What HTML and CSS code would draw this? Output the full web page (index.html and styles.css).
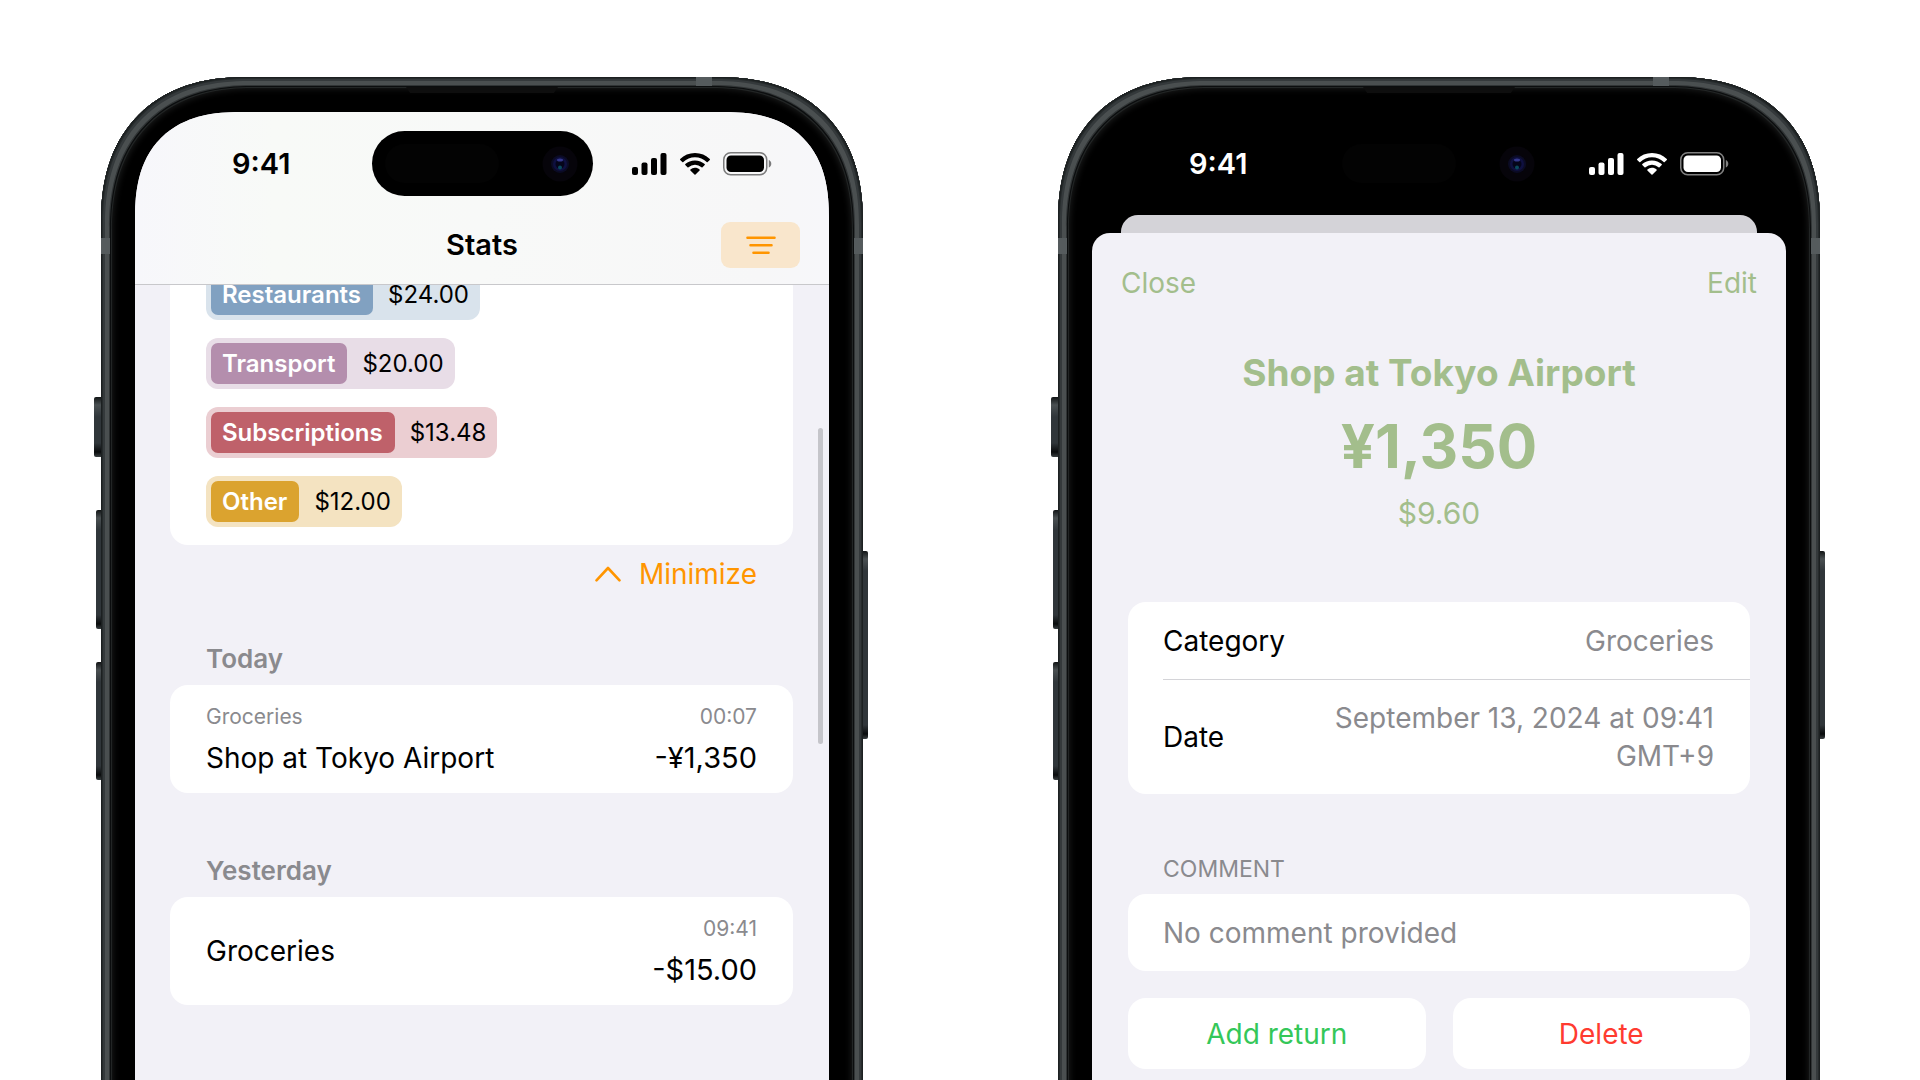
FILE: index.html
```html
<!DOCTYPE html>
<html lang="en">
<head>
<meta charset="utf-8">
<meta name="viewport" content="width=device-width, initial-scale=1">
<title>Stats</title>
<link rel="stylesheet" href="styles.css">
</head>
<body>
<svg class="sprite" aria-hidden="true">
  <symbol id="signal" viewBox="0 0 35 22">
    <rect x="0" y="14" width="6" height="8" rx="2"/>
    <rect x="9.5" y="9.500" width="6" height="12.500" rx="2"/>
    <rect x="19" y="5" width="6" height="17" rx="2"/>
    <rect x="28.500" y="0" width="6" height="22" rx="2"/>
  </symbol>
  <symbol id="wifi" viewBox="0 0 30 22">
    <path d="M15 0C20.800 0 26 2.200 29.800 5.900c.3.3.3.7 0 1L27.700 9c-.3.3-.7.3-1 0A16.800 16.800 0 0 0 3.300 9c-.3.300-.7.300-1 0L.2 6.900c-.3-.3-.3-.7 0-1C4 2.200 9.200 0 15 0z"/>
    <path d="M15 7.400c3.800 0 7.200 1.400 9.700 3.700.3.300.3.700 0 1l-2.200 2.200c-.3.300-.7.300-1 0a9.600 9.600 0 0 0-13 0c-.3.300-.7.300-1 0l-2.200-2.200c-.3-.3-.3-.7 0-1A14.200 14.200 0 0 1 15 7.400z"/>
    <path d="M15 14.700c1.800 0 3.400.6 4.600 1.700.3.300.3.700 0 1l-4.100 4.200c-.3.300-.7.300-1 0l-4.100-4.200c-.3-.3-.3-.7 0-1a6.700 6.700 0 0 1 4.600-1.700z"/>
  </symbol>
  <symbol id="battery" viewBox="0 0 49 24">
    <rect x=".75" y=".75" width="43" height="22" rx="7" fill="none" stroke="currentColor" stroke-width="1.500" opacity=".5"/>
    <rect x="3.500" y="3.500" width="37.500" height="16.500" rx="4.500"/>
    <path d="M45.800 8v7.500c1.500-.6 2.500-2 2.500-3.750S47.300 8.600 45.800 8z" opacity=".5"/>
  </symbol>
  <symbol id="camera" viewBox="0 0 36 36">
    <circle cx="18" cy="18" r="17.500" fill="#06040a"/>
    <circle cx="18" cy="18" r="9" fill="#0b0b24"/>
    <circle cx="18" cy="18" r="7" fill="#0f1040"/>
    <circle cx="18" cy="18" r="4.500" fill="#05051a"/>
    <ellipse cx="18" cy="14" rx="3" ry="1.500" fill="#34388c"/>
    <circle cx="18" cy="21.500" r="2" fill="#0a4a5c"/>
  </symbol>
</svg>

<main class="stage">
  <article class="phone">
    <span class="key key-action"></span><span class="key key-up"></span><span class="key key-down"></span><span class="key key-power"></span>
    <span class="band band-left"></span><span class="band band-right"></span><span class="band band-top"></span>
    <span class="speaker"></span>
    <div class="island"><span class="sensor"></span><svg class="lens"><use href="#camera"/></svg></div>

    <div class="screen stats">
      <header class="top">
        <div class="status">
          <time>9:41</time>
          <div class="indicators">
            <svg width="35" height="22"><use href="#signal"/></svg>
            <svg width="30" height="22"><use href="#wifi"/></svg>
            <svg width="49" height="24"><use href="#battery"/></svg>
          </div>
        </div>
        <div class="navbar">
          <h1>Stats</h1>
          <button class="filter" type="button" aria-label="Filter">
            <svg width="30" height="18" viewBox="0 0 30 18" fill="none" stroke="currentColor" stroke-width="2.600" stroke-linecap="round"><path d="M1.500 1.800h27M4.500 9.300h21M7.500 16.700h15"/></svg>
          </button>
        </div>
      </header>

      <div class="list">
        <ul class="card chips">
          <li class="chip blue"><span class="tag">Restaurants</span><span>$24.00</span></li>
          <li class="chip purple"><span class="tag">Transport</span><span>$20.00</span></li>
          <li class="chip red"><span class="tag">Subscriptions</span><span>$13.48</span></li>
          <li class="chip amber"><span class="tag">Other</span><span>$12.00</span></li>
        </ul>
        <button class="minimize" type="button">
          <svg width="26" height="16" viewBox="0 0 26 16" fill="none" stroke="currentColor" stroke-width="2.600" stroke-linecap="round" stroke-linejoin="round"><path d="M1.500 14.300L13 2l11.500 12.300"/></svg>
          Minimize
        </button>

        <section class="day">
          <h2>Today</h2>
          <div class="card entry">
            <div><p class="small">Groceries</p><p>Shop at Tokyo Airport</p></div>
            <div class="end"><p class="small">00:07</p><p class="sum">-¥1,350</p></div>
          </div>
        </section>
        <section class="day">
          <h2>Yesterday</h2>
          <div class="card entry">
            <div><p>Groceries</p></div>
            <div class="end"><p class="small">09:41</p><p class="sum">-$15.00</p></div>
          </div>
        </section>
      </div>
      <span class="scrollbar"></span>
    </div>
  </article>

  <article class="phone">
    <span class="key key-action"></span><span class="key key-up"></span><span class="key key-down"></span><span class="key key-power"></span>
    <span class="band band-left"></span><span class="band band-right"></span><span class="band band-top"></span>
    <span class="speaker"></span>
    <div class="island"><span class="sensor"></span><svg class="lens"><use href="#camera"/></svg></div>

    <div class="screen detail">
      <div class="status">
        <time>9:41</time>
        <div class="indicators">
          <svg width="35" height="22"><use href="#signal"/></svg>
          <svg width="30" height="22"><use href="#wifi"/></svg>
          <svg width="49" height="24"><use href="#battery"/></svg>
        </div>
      </div>
      <div class="behind"></div>
      <div class="sheet">
        <div class="actions">
          <button type="button">Close</button>
          <button type="button">Edit</button>
        </div>
        <header class="hero">
          <h2>Shop at Tokyo Airport</h2>
          <p class="amount">¥1,350</p>
          <p class="converted">$9.60</p>
        </header>
        <dl class="card facts">
          <div class="fact"><dt>Category</dt><dd>Groceries</dd></div>
          <div class="fact"><dt>Date</dt><dd>September 13, 2024 at 09:41 GMT+9</dd></div>
        </dl>
        <h3>COMMENT</h3>
        <p class="card comment">No comment provided</p>
        <div class="buttons">
          <button class="card add" type="button">Add return</button>
          <button class="card delete" type="button">Delete</button>
        </div>
      </div>
    </div>
  </article>
</main>
</body>
</html>
```

FILE: styles.css
```css
* { box-sizing: border-box; }

body, h1, h2, h3, p, ul, dl, dd { margin: 0; padding: 0; }

body {
  background: #fff;
  color: #000;
  font: 400 28px/36px Inter, "Liberation Sans", sans-serif;
}

button {
  border: 0;
  padding: 0;
  background: none;
  color: inherit;
  font: inherit;
  cursor: pointer;
}

.sprite { position: absolute; width: 0; height: 0; }

.stage {
  display: flex;
  gap: 195px;
  height: 100vh;
  padding: 77px 100px 0 101px;
  overflow: hidden;
}

/* Device body */
.phone {
  position: relative;
  display: flex;
  flex: 1;
  min-width: 0;
  min-height: 1200px;
  padding: 35px 34px 0;
  border-radius: 130px 130px 0 0;
  background: #000;
  box-shadow:
    inset 0 0 0 1px #1c2021,
    inset 0 0 0 2px #262b2c,
    inset 0 0 0 4px #34393b,
    inset 0 0 0 8px #4a4f50,
    inset 0 0 0 9px #303435,
    inset 0 0 0 10px #0b0d0e,
    inset 0 0 0 11px #222525,
    inset 0 0 6px 12px #1a1b1b;
}

.key {
  position: absolute;
  left: -5px;
  width: 5px;
  border-radius: 2px 0 0 2px;
  background: linear-gradient(#111415, #4a5052 8px, #30363a 20px, #30363a calc(100% - 14px), #090b0c calc(100% - 5px), #3a4042);
}
.key-action { top: 320px; left: -7px; width: 7px; height: 60px; }
.key-up { top: 433px; height: 119px; }
.key-down { top: 585px; height: 118px; }
.key-power { top: 474px; left: auto; right: -5px; height: 188px; border-radius: 0 2px 2px 0; }

.band { position: absolute; background: #555b5d; }
.band-left, .band-right { top: 161px; width: 9px; height: 16px; }
.band-left { left: 0; }
.band-right { right: 0; }
.band-top { top: 0; right: 151px; width: 16px; height: 9px; }

.speaker {
  position: absolute;
  top: 10px;
  left: 50%;
  width: 152px;
  height: 6px;
  margin-left: -76px;
  background: #0e0e0e;
  clip-path: polygon(0 0, 100% 0, calc(100% - 4px) 100%, 4px 100%);
}

.island {
  position: absolute;
  z-index: 3;
  top: 54px;
  left: 50%;
  display: flex;
  justify-content: space-between;
  align-items: center;
  width: 221px;
  height: 65px;
  margin-left: -110px;
  padding: 0 15px 0 13px;
  border-radius: 33px;
  background: #000;
}
.sensor { width: 114px; height: 39px; border-radius: 20px; background: #030303; }
.lens { width: 36px; height: 36px; }

/* Screen and status bar */
.screen {
  position: relative;
  flex: 1;
  min-width: 0;
  overflow: hidden;
}

.status {
  display: flex;
  justify-content: space-between;
  align-items: center;
  height: 103px;
  padding: 0 57px 0 97px;
  font-size: 29px;
  font-weight: 600;
}
.indicators { display: flex; align-items: center; gap: 13px; fill: currentColor; }

/* Stats */
.stats { border-radius: 90px 90px 0 0; background: #f2f1f7; }

/* Continuous corners where the browser can draw them */
@supports (corner-shape: superellipse(1.2)) {
  .phone { border-radius: 145px 145px 0 0; corner-shape: superellipse(1.2); }
  .stats { border-radius: 106px 106px 0 0; corner-shape: superellipse(1.3); }
}

.top {
  position: relative;
  z-index: 1;
  border-bottom: 1px solid #c8c8cb;
  background: linear-gradient(90deg, #f7f7fb, #f8faf7 20%, #f8f9f8 50%, #f7f7f8 90%, #f7f7fa);
}

.navbar {
  display: grid;
  grid-template-columns: 1fr auto 1fr;
  align-items: center;
  padding: 7px 29px 16px;
}
.navbar h1 { grid-column: 2; font-size: 29px; font-weight: 600; }
.filter {
  display: flex;
  justify-content: center;
  align-items: center;
  justify-self: end;
  width: 79px;
  height: 46px;
  border-radius: 9px;
  background: #f9e6cc;
  color: #ff9500;
}

.list { padding: 0 36px 0 35px; }
.card { border-radius: 18px; background: #fff; }

.chips {
  display: flex;
  flex-direction: column;
  align-items: flex-start;
  gap: 18px;
  margin-top: -16px;
  padding: 0 36px 18px;
  list-style: none;
}
.chip {
  display: flex;
  align-items: center;
  gap: 15px;
  padding: 5px 11px 5px 5px;
  border-radius: 12px;
  font-size: 24px;
  line-height: 41px;
}
.tag { padding: 0 12px 0 11px; border-radius: 7px; color: #fff; font-weight: 600; }
.blue { background: #d9e3ec; }
.blue .tag { background: #81a1c1; }
.purple { background: #e8dde7; }
.purple .tag { background: #b48ead; }
.red { background: #ebced2; }
.red .tag { background: #bf616a; }
.amber { background: #f4e3c1; }
.amber .tag { background: #dba32f; }

.minimize {
  display: flex;
  align-items: center;
  gap: 18px;
  height: 58px;
  margin: 0 36px 0 auto;
  color: #ff9500;
}

.day { margin-top: 40px; }
.day + .day { margin-top: 62px; }
.day h2 {
  margin: 0 36px 10px;
  color: #8a8a8e;
  font-size: 26px;
  font-weight: 600;
  line-height: 32px;
}
.entry {
  display: flex;
  justify-content: space-between;
  align-items: center;
  padding: 17px 36px;
}
.small { margin-bottom: 8px; color: #8a8a8e; font-size: 21px; line-height: 30px; }
.end { text-align: right; }
.sum { font-size: 29px; }

.scrollbar {
  position: absolute;
  top: 316px;
  right: 6px;
  width: 5px;
  height: 316px;
  border-radius: 3px;
  background: #c5c5ca;
}

/* Transaction detail */
.detail .status { color: #fff; }
.behind { height: 18px; margin: 0 29px; border-radius: 17px 17px 0 0; background: #d4d3d8; }
.sheet {
  min-height: 1000px;
  padding: 0 36px;
  border-radius: 18px 18px 0 0;
  background: #f2f1f7;
}
.actions {
  display: flex;
  justify-content: space-between;
  align-items: center;
  height: 100px;
  margin: 0 -7px;
  color: #a3be8c;
}

.hero {
  display: flex;
  flex-direction: column;
  gap: 13px;
  padding: 16px 0 71px;
  color: #a3be8c;
  text-align: center;
}
.hero h2 { font-size: 37px; font-weight: 700; line-height: 48px; }
.amount { font-size: 60px; font-weight: 700; line-height: 72px; }
.converted { font-size: 30px; }

.facts { padding-left: 35px; }
.fact {
  display: flex;
  justify-content: space-between;
  align-items: center;
  padding: 20px 36px 19px 0;
  line-height: 38px;
}
.fact + .fact { border-top: 1px solid #d4d4d8; padding-top: 19px; }
.fact dd { max-width: 400px; color: #8a8a8e; text-align: right; }

.sheet h3 {
  margin: 60px 35px 10px;
  color: #8a8a8e;
  font-size: 23px;
  font-weight: 400;
  line-height: 30px;
}
.comment { padding: 21px 35px 20px; color: #8a8a8e; }
.buttons { display: grid; grid-template-columns: 1fr 1fr; gap: 27px; margin-top: 27px; }
.buttons button { height: 71px; }
.add { color: #34c759; }
.delete { color: #ff3b30; }
```
